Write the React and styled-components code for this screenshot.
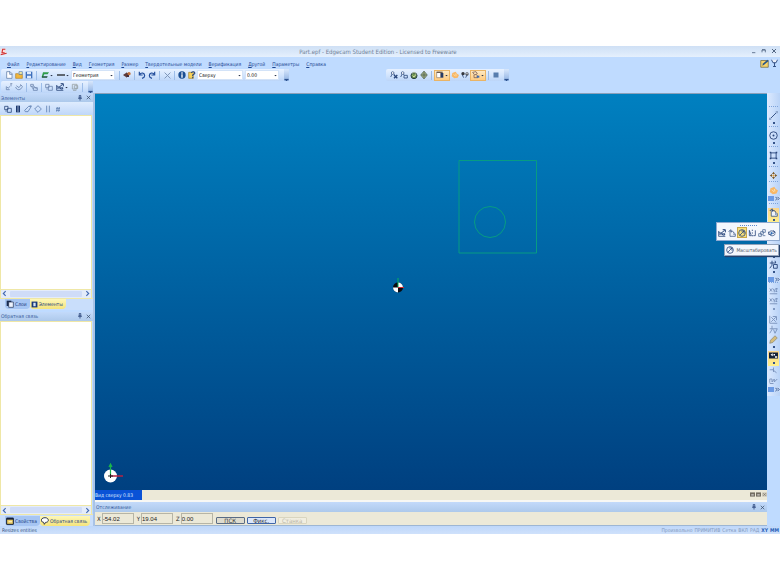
import React from "react";
import styled, { createGlobalStyle, css } from "styled-components";

const GlobalStyle = createGlobalStyle`
  *, *::before, *::after { box-sizing: border-box; }
  body { margin: 0; background: #fff; }
  body, button, input, select {
    font-family: "DejaVu Sans Condensed", "DejaVu Sans", sans-serif;
    font-size: 5px;
    line-height: 8px;
    color: #1d3f83;
  }
  button, input, select { margin: 0; padding: 0; border: 0; background: none; border-radius: 0; }
  button, svg { flex: none; }
`;

const NAVY = "#28457a";

const Screen = styled.div`
  min-height: 100vh;
  padding: 46px 0;
  display: flex;
  flex-direction: column;
`;
const AppWindow = styled.main`
  flex: 1;
  display: flex;
  flex-direction: column;
  background: #bfdbff;
  overflow: hidden;
`;
const TitleBar = styled.header`
  height: 11px;
  display: grid;
  grid-template-columns: 30px 1fr 30px;
  align-items: center;
  background: linear-gradient(#cfe0f5, #dbe9fa 60%, #e6f0fd);
`;
const Title = styled.h1`
  margin: 0;
  text-align: center;
  font-size: 6px;
  font-weight: 400;
  line-height: 10px;
  padding-right: 24px;
  color: #6f7f96;
`;
const WindowButtons = styled.div`
  display: flex;
  justify-content: flex-end;
  gap: 2px;
  padding-right: 2px;
`;
const MenuRow = styled.nav`
  height: 12px;
  display: flex;
  align-items: center;
  gap: 7px;
  padding: 1px 1px 0 7px;
`;
const MenuItem = styled.button`
  color: #1d4693;
  white-space: nowrap;
`;
const MenuEnd = styled.div`
  margin-left: auto;
  display: flex;
`;
const ToolRow = styled.div`
  height: 12px;
  display: flex;
  align-items: center;
  padding-left: 1px;
`;
const ToolGroup = styled.div`
  height: 12px;
  display: flex;
  align-items: center;
  padding-left: 3px;
  margin-left: ${(p) => p.$gap || 0}px;
  border-radius: 2px;
  background: linear-gradient(#e7f1ff, #d3e5fd 50%, #bcd5f8);
`;
const ToolButton = styled.button`
  width: ${(p) => (p.$wide ? 16 : 10)}px;
  height: 11px;
  display: flex;
  align-items: center;
  justify-content: center;
  ${(p) => p.$dim && css`
    opacity: 0.6;
  `}
  ${(p) => p.$on && css`
    background: linear-gradient(#fde9c4, #ffcb80);
    border: 1px solid #e9b466;
  `}
  ${(p) => p.$picked && css`
    background: #f6df7c;
    border: 1px solid #c9a94c;
  `}
`;
const TitleButton = styled.button`
  width: 8px;
  height: 8px;
  display: flex;
  align-items: center;
  justify-content: center;
`;
const Separator = styled.span`
  width: 1px;
  height: 9px;
  margin: 0 2px;
  background: #9dbde8;
`;
const Overflow = styled.button`
  width: 5px;
  height: 12px;
  margin-left: 3px;
  display: flex;
  align-items: flex-end;
  background: linear-gradient(#d8e7fc, #8fb2e2);
`;
const Combo = styled.div`
  width: ${(p) => p.$width}px;
  height: 10px;
  margin-right: 2px;
  display: flex;
  align-items: center;
  background: #fff;
  border: 1px solid #d3e3f8;
  select {
    flex: 1;
    min-width: 0;
    appearance: none;
    color: #111;
    height: 8px;
    line-height: 8px;
    padding-left: 1px;
  }
`;
const Workspace = styled.div`
  flex: 1;
  display: grid;
  grid-template-columns: 95px minmax(0, 1fr) 13px;
`;
const Side = styled.aside`
  display: flex;
  flex-direction: column;
  gap: 2px;
  border-right: 2px solid #a9c3e6;
`;
const Panel = styled.section`
  flex: ${(p) => p.$grow} 1 0;
  display: flex;
  flex-direction: column;
`;
const PanelTitle = styled.div`
  height: ${(p) => p.$height || 9}px;
  display: flex;
  align-items: center;
  padding: 0 1px;
  background: linear-gradient(#c3dafa, #adc9eb);
  h2 { margin: 0; flex: 1; font-size: 5px; font-weight: 400; line-height: 8px; color: #35599a; }
`;
const PanelTools = styled.div`
  height: 13px;
  display: flex;
  align-items: center;
  padding-left: 3px;
  background: linear-gradient(#dfecfe, #bfd7f9);
`;
const ListBox = styled.div`
  flex: 1;
  margin-right: 1px;
  background: #fff;
  border: 1px solid #efe7a6;
`;
const ScrollBar = styled.div`
  height: 8px;
  margin-right: 1px;
  display: flex;
  justify-content: space-between;
  align-items: center;
  background: #e4ecfa;
  border: solid #efe7a6;
  border-width: 0 1px;
  button { display: flex; }
`;
const ScrollThumb = styled.span`
  flex: 1;
  height: 6px;
  margin: 0 2px;
  border-radius: 1px;
  background: #cfdcf8;
`;
const Tabs = styled.div`
  height: 12px;
  display: flex;
  align-items: center;
  padding-left: 5px;
  border-top: 1px solid #efe7a6;
  background: #c9defb;
`;
const Tab = styled.button`
  height: 10px;
  display: flex;
  align-items: center;
  gap: 1px;
  white-space: nowrap;
  padding: 0 3px 0 1px;
  border-radius: 0 0 4px 4px;
  background: ${(p) => (p.$on ? "linear-gradient(#fdf7b8, #f5e47c)" : "#a6c5f3")};
  color: #1c3c7e;
`;
const Center = styled.section`
  display: flex;
  flex-direction: column;
  min-width: 0;
  background: #ece9d8;
`;
const Viewport = styled.div`
  flex: 1;
  min-height: 0;
  border-top: 1px solid #8aa0ba;
  background: linear-gradient(#0080c0, #004080);
  display: flex;
`;
const Drawing = styled.svg`
  width: 100%;
  aspect-ratio: 672 / 396;
  display: block;
`;
const ViewTabs = styled.div`
  height: 12px;
  display: flex;
  align-items: center;
  gap: 1px;
  border-bottom: 2px solid #f8f8f4;
`;
const ViewTab = styled.button`
  width: 47px;
  height: 10px;
  margin-right: auto;
  text-align: left;
  white-space: nowrap;
  background: #0a52d6;
  color: #d9e8ff;
`;
const CoordRow = styled.form`
  height: 14px;
  display: flex;
  align-items: center;
  padding-left: 2px;
  border-bottom: 1px solid #9db6d3;
`;
const Coord = styled.label`
  display: flex;
  align-items: center;
  gap: 1px;
  margin-right: 3px;
  color: #222;
  font-size: 6px;
  input {
    width: 32px;
    height: 11px;
    border: 1px solid #b6b5a6;
    color: #222;
    background: #ece9d8;
    font-family: "Liberation Sans", sans-serif;
    font-size: 6px;
  }
`;
const SnapButton = styled.button`
  width: 29px;
  height: 7px;
  margin: 3px 2px 0 0;
  font-size: 6px;
  line-height: 5px;
  border: 1px solid ${(p) => (p.$tone === "off" ? "#d9d5bf" : p.$tone === "on" ? "#3f66a8" : "#5a6c84")};
  border-radius: 1px;
  color: ${(p) => (p.$tone === "off" ? "#b8b5a6" : "#333")};
  background: ${(p) => (p.$tone === "on" ? "#dbe7fb" : p.$tone === "off" ? "#f1eee0" : "#dedccf")};
`;
const Strip = styled.aside`
  position: relative;
  display: flex;
  flex-direction: column;
  align-items: center;
  padding-top: 13px;
  background: linear-gradient(90deg, #dceaff, #b9d3f7) no-repeat;
  background-size: 100% 303px;
`;
const StripGrip = styled.span`
  height: 5px;
  width: 9px;
  border-top: 1px dotted #7da3da;
`;
const StripSpace = styled.span`
  height: ${(p) => p.$size}px;
`;
const StripButton = styled.button`
  width: 11px;
  height: ${(p) => (p.$menu ? 15 : 10)}px;
  display: flex;
  flex-direction: column;
  align-items: center;
  justify-content: space-between;
  opacity: ${(p) => (p.$dim ? 0.5 : 1)};
  background: ${(p) => (p.$on ? "linear-gradient(#fbd58b, #fff08a)" : "none")};
  &::after {
    content: "";
    display: ${(p) => (p.$menu ? "block" : "none")};
    width: 2px;
    height: 2px;
    margin-bottom: 2px;
    background: #35548a;
  }
`;
const StripMore = styled.button`
  width: 12px;
  height: 5px;
  display: flex;
  align-items: center;
  justify-content: flex-end;
  background: linear-gradient(90deg, #6b9ae4 50%, #c7dcfa 50%);
`;
const Flyout = styled.div`
  position: absolute;
  top: 129px;
  right: 0;
  width: 64px;
  height: 19px;
  padding: 3px 0 1px;
  display: flex;
  align-items: center;
  background: #f4f7fd;
  border: 1px solid #8ea9d0;
  &::before {
    content: "";
    position: absolute;
    top: 2px;
    left: 23px;
    width: 17px;
    border-top: 1px dotted #5c8ad0;
  }
`;
const Tip = styled.div`
  position: absolute;
  top: 151px;
  right: 1px;
  height: 12px;
  padding: 0 1px;
  display: flex;
  align-items: center;
  gap: 2px;
  white-space: nowrap;
  color: #505766;
  background: #f3f6fc;
  border: 1px solid #93a3bb;
  box-shadow: 1px 1px 1px #24406c;
`;
const StatusBar = styled.footer`
  height: 8px;
  display: flex;
  align-items: center;
  padding: 0 1px 0 2px;
  background: linear-gradient(#bed7fa, #cfe1fb);
  color: #35517c;
`;
const StatusInfo = styled.div`
  margin-left: auto;
  display: flex;
  gap: 2px;
  color: #8299bd;
  strong { color: #245bb5; font-weight: 700; }
`;

const line = { fill: "none", stroke: NAVY, strokeWidth: 1.2 };
const ICONS = {
  logo: <><path d="M1 1h8v8H1z" fill="#f5dede" /><path d="M8 2H4L3 7h4M1 10l9-2" fill="none" stroke="#d03030" strokeWidth="1.6" /></>,
  minimize: <path d="M3 8.500h5" {...line} stroke="#4c5f7d" />,
  restore: <path d="M3 8V4.500h5V8M3 4h5" {...line} stroke="#4c5f7d" />,
  close: <path d="M3 3l6 6M9 3l-6 6" {...line} stroke="#334866" />,
  pin: <path d="M4.500 1h3v5h-3zM2 6.500h8M6 7v4" {...line} strokeWidth="1.6" />,
  note: <><path d="M1 2h10v9H1z" fill="#f9d46a" stroke="#6d6740" /><path d="M3 9l1-3 6-5 1.500 1.500L5 8z" fill="#27558a" /></>,
  funnel: <><path d="M2 1l2 4h4l2-4z" fill="#e9eef8" /><path d="M2 1l2 4h4l2-4M6 5v5M4 10h4" {...line} /></>,
  page: <path d="M2.500 1h5l3 3v7h-8zM7 1v4h4" fill="#fff" stroke="#51709d" />,
  open: <><path d="M1 4h4l1 1h5v6H1z" fill="#f1b73c" stroke="#b58022" /><path d="M6 1h5v4H6z" fill="#fff3a5" stroke="#4c73ab" /></>,
  save: <><path d="M1 1h10v10H1z" fill="#3f70bd" /><path d="M3 1h6v4H3zM3 7h6v4H3z" fill="#dfeafa" /></>,
  layer: <><path d="M3 2h9l-2 3H5L3 9H1z" fill="#2f9d4c" /><path d="M1 10h8l1-2H2z" fill="#174e34" /></>,
  dash: <path d="M0 6h12" stroke="#111" strokeWidth="1.800" />,
  arrow: <path d="M3 4.500h6L6 8z" fill="#222d44" />,
  brush: <><path d="M0 6l6-4v8z" fill="#5b3a3a" /><path d="M6 3h3v6H6z" fill="#3d2b3c" /><circle cx="9" cy="4" r="2.500" fill="#c2703a" /></>,
  undo: <path d="M2 1v5h5M2 6c3-5 8-3 8 1 0 2-1 3-4 4" {...line} strokeWidth="1.800" stroke="#244f9c" />,
  redo: <path d="M10 1v5H5M10 6C7 1 2 3 2 7c0 2 1 3 4 4" {...line} strokeWidth="1.800" stroke="#244f9c" />,
  cross: <path d="M1 1l10 10M11 1L1 11" {...line} strokeWidth="1.600" stroke="#7b91b4" />,
  info: <><circle cx="6" cy="6" r="5.500" fill="#1c4f93" /><path d="M6 2v2M6 5v5" stroke="#fff" strokeWidth="2" /></>,
  help: <><path d="M1 2h7v9H1z" fill="#f8d25b" stroke="#a3822c" /><path d="M5 3c1-3 6-2 5 1L7 6v2M7 9v2" {...line} strokeWidth="1.600" /></>,
  nodes: <><path d="M1 9L4 3l3 3" {...line} /><circle cx="4" cy="3" r="2" fill="#fff" stroke={NAVY} /><path d="M6 6l5 5M11 6l-5 5" {...line} strokeWidth="2" /></>,
  nodeBox: <><path d="M1 9l3-6 2 3M6 6.500h5v4H6z" {...line} /><circle cx="4" cy="3" r="2" fill="#fff" stroke={NAVY} /></>,
  orbit: <><circle cx="6" cy="7" r="4.500" fill="#6f9350" stroke="#263f45" strokeWidth="1.500" /><path d="M3 4l3-3 3 3M4 7l2 2 3-4" {...line} stroke="#e8efc3" /></>,
  gem: <><path d="M6 0l5 6-5 6-5-6z" fill="#a3ae7c" stroke="#4b5f58" /><path d="M6 2v8M2 6h8" {...line} stroke="#4b5f58" /></>,
  cube: <><path d="M1 2h6v8H1z" fill="#fff" stroke="#8d7a66" /><path d="M7 3h4v7H7z" fill="#273a64" /><path d="M1 1h9v2H1z" fill="#6d5d52" /></>,
  hand: <><path d="M2 3l3-1 2-1 2 3 3 2-2 4-5 1-4-3z" fill="#f8b766" /><path d="M4 5l3 3M7 4l1 3" stroke="#fff0c6" /></>,
  gears: <><circle cx="3" cy="4" r="2.500" fill="#34363d" /><circle cx="9" cy="4.500" r="2.500" fill="#4c5058" /><path d="M2 6l2 4M9 6l-2 4" {...line} /><circle cx="9" cy="4" r="1" fill="#fff" /></>,
  tool: <><path d="M1 2l5-1 2 3-4 2zM3 6v4h6M6 5l4 4" {...line} stroke="#7c5f55" /><path d="M7 7h4v3H7z" fill="#3f6ab0" /></>,
  block: <path d="M1 1h10v10H1z" fill="#577dae" />,
  more: <><path d="M1 7h10v2H1z" fill="#173d7c" /><path d="M2 9h8l-4 3z" fill="#173d7c" /></>,
  points: <path d="M2 5v5h5M3 6l2 2 2-3M9 1v4M8 1h3" {...line} />,
  curve: <path d="M1 6c1 5 8 6 10-1M2 4l4 3 3-4M8 2l3 3" {...line} />,
  pair: <path d="M1 2h4v3H1zM5 4l5 5M5 7h6v4H5zM2 5l3 4" {...line} />,
  box: <path d="M1 2h5v5H1zM5 5h6v6H5zM2 9h2" {...line} />,
  chart: <><path d="M1 3v8h10M1 5h2" {...line} /><path d="M3 9V6h3v3M5 6l5-4M7 1h4v4M8 7h2v2H7v-2" {...line} strokeWidth="1.500" /></>,
  bulb: <path d="M2 2h7v7H2zM5 4h5v4H5zM3 11h5" {...line} stroke="#6e7468" />,
  tower: <><path d="M3 1h6v10H3z" fill="#1b376d" /><path d="M5 3h2M5 6h2M5 9h2" stroke="#d7e8ff" strokeWidth="1.5" /></>,
  erase: <path d="M1 8l6-6h4L6 10H2zM8 2l3-1" {...line} stroke="#5c7caf" />,
  diamond: <path d="M6 1l5 5-5 5-5-5z" {...line} stroke="#5c7caf" />,
  bars: <path d="M4 1v10M8 1v10" {...line} stroke="#5c7caf" />,
  hash: <path d="M5 3L4 10M8 3L7 10M3 5h6M3 8h6" {...line} stroke="#5c7caf" />,
  sheets: <><path d="M1 1h7v8H1z" fill="#1b2c4e" /><path d="M4 3h7v8H4z" fill="#eef4ff" stroke="#1b2c4e" /></>,
  element: <><path d="M1 1h10v10H1z" fill="#173779" /><path d="M4 3h4v6H4z" fill="#d9e4f2" /></>,
  props: <><path d="M1 2h10v9H1z" fill="#efcf65" stroke="#111b2f" strokeWidth="1.500" /><path d="M1 1h10v3H1z" fill="#14213c" /><path d="M4 7h5" stroke="#fff" /></>,
  bubble: <path d="M6 1C-1 1-1 8 4 8l1 3 2-3C13 8 12 1 6 1z" fill="#fff" stroke="#17213c" strokeWidth="1.300" />,
  segment: <><path d="M2 10l8-8" {...line} /><path d="M0 9h3v3H0zM9 0h3v3H9z" fill="#8fa8cd" /></>,
  circle: <><circle cx="6" cy="6" r="5" {...line} /><circle cx="6" cy="6" r="1.300" fill={NAVY} /></>,
  rect: <><path d="M2.500 2.500h7v7h-7z" {...line} /><path d="M1 1h2v2H1zM9 1h2v2H9zM1 9h2v2H1zM9 9h2v2H9z" fill={NAVY} /></>,
  plus: <><path d="M6 1l2 3H4zM6 11L4 8h4zM1 6l3-2v4zM11 6L8 4v4z" fill="#7a5a2c" /><circle cx="6" cy="6" r="1.500" fill="#e89c32" /></>,
  move: <><path d="M3 3v8h8V7" fill="#eef3fb" stroke={NAVY} /><path d="M1 4l3-3 1 4M4 3c4 0 6 2 5 6" {...line} /></>,
  scale: <><circle cx="6" cy="6" r="5" {...line} /><path d="M3 9l6-6M5 3h4v4" {...line} /></>,
  mirror: <path d="M2 2v8h3M11 2v8H8M2 2l3 8M6.500 1v2M6.500 5v2M6.500 9v2" {...line} />,
  array: <path d="M1 7h4v4H1zM4 4h4v4H4zM7 1h4v4H7zM7 10h4" {...line} stroke="#536f9b" />,
  rotate: <><path d="M1 6c2-4 6-4 9-1M8 2l3 3-4 2M11 7c-2 4-6 4-9 1M1 4v4h4" {...line} /><path d="M4 4l4 2-4 3z" fill="#2e6cb5" /></>,
  trim: <path d="M1 4h8M4 1v6l-3 4M6 6h5v5H6zM8 1l1 3" {...line} />,
  dimension: <path d="M1 2l3 4M4 2L1 6M5 2l2 3 2-3M7 5v2M9 2h2L9 6h2M1 9h10" {...line} />,
  hatch: <path d="M1 1v10h10M3 3l6 6M9 3L3 9M5 2h5v5" {...line} />,
  angle: <path d="M1 5h10M4 1v5l-3 5M6 6l2 5 3-6" {...line} />,
  pencil: <path d="M2 7l6-6 3 3-6 6-4 1z" fill="#d6bd7a" stroke="#8c8a78" />,
  film: <><path d="M0 2h12v8H0z" fill="#152139" /><path d="M2 5l3-2v4zM6 4h2v2H6zM8 7h3v2H8zM2 8h3" fill="#fff" /></>,
  spark: <path d="M1 5h5M6 2v6M5 5l5 4" {...line} />,
  wave: <path d="M1 9V4h3v4l3-4v4l4-4M1 10h5" {...line} />,
  chevronL: <path d="M8 2L4 6l4 4" {...line} strokeWidth="2" stroke="#4169b1" />,
  chevronR: <path d="M4 2l4 4-4 4" {...line} strokeWidth="2" stroke="#4169b1" />,
  rewind: <path d="M1 2l4 4-4 4M6 2l4 4-4 4" {...line} strokeWidth="2" />,
  winBox: <><path d="M0 1h12v10H0z" fill="#716c61" /><path d="M3 6h6v2H3z" fill="#fff" /></>,
  winClose: <><path d="M0 1h12v10H0z" fill="#c9c5b7" /><path d="M3 3l6 6M9 3L3 9" stroke="#777267" strokeWidth="1.500" /></>,
};

const Icon = ({ name, size = 8 }) => (
  <svg width={size} height={size} viewBox="0 0 12 12" aria-hidden="true">{ICONS[name]}</svg>
);
const Tool = ({ name, label = name, menu, size, ...rest }) => (
  <ToolButton aria-label={label} $wide={menu} {...rest}>
    <Icon name={name} size={size} />
    {menu && <Icon name="arrow" size={5} />}
  </ToolButton>
);
const More = () => <Overflow aria-label="Ещё"><Icon name="more" size={5} /></Overflow>;
const Select = ({ label, value, width }) => (
  <Combo $width={width}>
    <select aria-label={label} defaultValue={value}><option>{value}</option></select>
    <Icon name="arrow" size={5} />
  </Combo>
);
const Heading = ({ text, height }) => (
  <PanelTitle $height={height}>
    <h2>{text}</h2>
    <TitleButton aria-label="Закрепить"><Icon name="pin" size={6} /></TitleButton>
    <TitleButton aria-label="Закрыть"><Icon name="close" size={7} /></TitleButton>
  </PanelTitle>
);
const Scroll = () => (
  <ScrollBar>
    <button aria-label="Влево"><Icon name="chevronL" size={7} /></button>
    <ScrollThumb />
    <button aria-label="Вправо"><Icon name="chevronR" size={7} /></button>
  </ScrollBar>
);

const MENUS = ["Файл", "Редактирование", "Вид", "Геометрия", "Размер", "Твердотельные модели", "Верификация", "Другой", "Параметры", "Справка"];

const STRIP = [
  { grip: 1 }, { icon: "segment", menu: 1 },
  { grip: 1 }, { icon: "circle", menu: 1 },
  { grip: 1 }, { icon: "rect", menu: 1 },
  { grip: 1 }, { icon: "plus" },
  { grip: 1 }, { icon: "hand" }, { more: 1 }, { space: 2 },
  { grip: 1 }, { icon: "move", menu: 1, on: 1 },
  { space: 22 }, { icon: "mirror", menu: 1 },
  { icon: "trim", menu: 1 }, { space: 2 }, { more: 1 },
  { grip: 1 }, { icon: "dimension", dim: 1 }, { icon: "dimension", menu: 1, dim: 1 },
  { space: 3 }, { icon: "hatch", dim: 1 }, { icon: "angle", dim: 1 }, { icon: "pencil", menu: 1 },
  { space: 1 }, { icon: "film", menu: 1, on: 1 },
  { icon: "spark", dim: 1 }, { icon: "wave", dim: 1 }, { space: 1 }, { more: 1 },
];

const StripItem = ({ item }) => {
  if (item.grip) return <StripGrip />;
  if (item.space) return <StripSpace $size={item.space} />;
  if (item.more) return <StripMore aria-label="Ещё"><Icon name="rewind" size={5} /></StripMore>;
  return (
    <StripButton aria-label={item.icon} $menu={item.menu} $on={item.on} $dim={item.dim}>
      <Icon name={item.icon} size={9} />
    </StripButton>
  );
};

const Model = () => (
  <Drawing viewBox="0 0 672 396" role="img" aria-label="Вид сверху">
    <g fill="none" stroke="#079c83" strokeWidth="1">
      <path d="M364 66.500h77.500v92.500H364z" />
      <circle cx="395" cy="128" r="15.500" />
    </g>
    <g>
      <circle cx="303" cy="193.500" r="5" fill="#090c12" />
      <path d="M303 193.500v-5a5 5 0 0 1 5 5zM303 193.500v5a5 5 0 0 1-5-5z" fill="#fff" />
      <path d="M303 193v-9" stroke="#08b35f" />
      <path d="M303 193.500h6" stroke="#d22b32" />
    </g>
    <g>
      <circle cx="15.500" cy="382" r="6.500" fill="#fff" />
      <path d="M15.500 382v-12M14 373l1.500-3 1.500 3" fill="none" stroke="#19b64b" strokeWidth="1.200" />
      <path d="M15.500 382H28" stroke="#b32343" strokeWidth="1.500" />
      <path d="M13 382h5M15.500 380v4" stroke="#222" />
    </g>
  </Drawing>
);

export default function App() {
  return (
    <Screen>
      <GlobalStyle />
      <AppWindow>
        <TitleBar>
          <Icon name="logo" />
          <Title>Part.epf - Edgecam Student Edition - Licensed to Freeware</Title>
          <WindowButtons>
            {["minimize", "restore", "close"].map((n) => <button key={n} aria-label={n}><Icon name={n} /></button>)}
          </WindowButtons>
        </TitleBar>
        <MenuRow>
          {MENUS.map((m) => <MenuItem key={m}><u>{m[0]}</u>{m.slice(1)}</MenuItem>)}
          <MenuEnd><Tool name="note" size={9} /><Tool name="funnel" size={9} /></MenuEnd>
        </MenuRow>
        <ToolRow>
          <ToolGroup>
            <Tool name="page" label="Новый" /><Tool name="open" label="Открыть" /><Tool name="save" label="Сохранить" />
            <Separator />
            <Tool name="layer" menu label="Слой" /><Tool name="dash" menu label="Тип линии" />
            <Select label="Слой" value="Геометрия" width={44} />
            <Separator />
            <Tool name="brush" /><Separator /><Tool name="undo" /><Tool name="redo" /><Separator />
            <Tool name="cross" size={7} /><Separator /><Tool name="info" /><Tool name="help" />
            <Select label="Вид" value="Сверху" width={46} />
            <Select label="Глубина" value="0.00" width={34} />
            <More />
          </ToolGroup>
          <ToolGroup $gap={97}>
            <Tool name="nodes" /><Tool name="nodeBox" /><Tool name="orbit" /><Tool name="gem" />
            <Separator />
            <Tool name="cube" menu $on /><Tool name="hand" /><Tool name="gears" /><Tool name="tool" menu $on />
            <Separator />
            <Tool name="block" size={6} />
            <More />
          </ToolGroup>
        </ToolRow>
        <ToolRow>
          <ToolGroup>
            <Tool name="points" $dim /><Tool name="curve" $dim /><Separator />
            <Tool name="pair" $dim /><Separator />
            <Tool name="box" $dim /><Tool name="chart" menu /><Tool name="bulb" $dim /><Separator />
            <More />
          </ToolGroup>
        </ToolRow>
        <Workspace>
          <Side>
            <Panel $grow={217}>
              <Heading text="Элементы" />
              <PanelTools>
                {["box", "tower", "erase", "diamond", "bars", "hash"].map((n) => <Tool key={n} name={n} />)}
              </PanelTools>
              <ListBox />
              <Scroll />
              <Tabs>
                <Tab><Icon name="sheets" />Слои</Tab>
                <Tab $on><Icon name="element" size={7} />Элементы</Tab>
              </Tabs>
            </Panel>
            <Panel $grow={215}>
              <Heading text="Обратная связь" />
              <ListBox />
              <Scroll />
              <Tabs>
                <Tab><Icon name="props" />Свойства</Tab>
                <Tab $on><Icon name="bubble" />Обратная связь</Tab>
              </Tabs>
            </Panel>
          </Side>
          <Center>
            <Viewport><Model /></Viewport>
            <ViewTabs>
              <ViewTab>Вид сверху 0.83</ViewTab>
              <button aria-label="Свернуть"><Icon name="winBox" size={5} /></button>
              <button aria-label="Развернуть"><Icon name="winBox" size={5} /></button>
              <button aria-label="Закрыть вид"><Icon name="winClose" size={5} /></button>
            </ViewTabs>
            <Heading text="Отслеживание" height={10} />
            <CoordRow>
              <Coord>X<input defaultValue="-54.02" /></Coord>
              <Coord>Y<input defaultValue="19.04" /></Coord>
              <Coord>Z<input defaultValue="0.00" /></Coord>
              <SnapButton type="button">ПСК</SnapButton>
              <SnapButton type="button" $tone="on">Фикс.</SnapButton>
              <SnapButton type="button" $tone="off">Станка</SnapButton>
            </CoordRow>
          </Center>
          <Strip>
            {STRIP.map((item, i) => <StripItem key={i} item={item} />)}
            <Flyout>
              {["chart", "move", "scale", "mirror", "array", "rotate"].map((n) => (
                <Tool key={n} name={n} $picked={n === "scale"} />
              ))}
            </Flyout>
            <Tip role="tooltip"><Icon name="scale" />Масштабировать</Tip>
          </Strip>
        </Workspace>
        <StatusBar>
          <span>Resizes entities</span>
          <StatusInfo>
            <span>Произвольно</span><span>ПРИМИТИВ</span><span>Сетка</span><span>ВКЛ</span><span>РАД</span>
            <strong>XY</strong><strong>ММ</strong>
          </StatusInfo>
        </StatusBar>
      </AppWindow>
    </Screen>
  );
}
